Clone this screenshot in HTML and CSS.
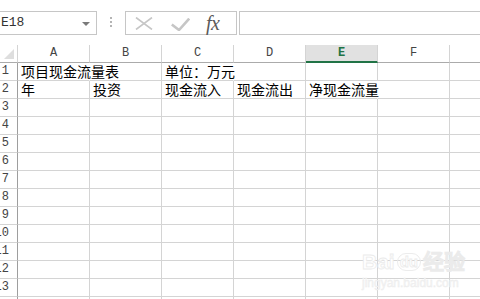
FILE: index.html
```html
<!DOCTYPE html>
<html lang="zh-CN">
<head>
<meta charset="utf-8">
<title>Sheet</title>
<link rel="stylesheet" href="styles.css">
</head>
<body>
<div class="app">
  <div class="fbar">
    <div class="namebox"><span class="ref">E18</span><span class="caret"></span></div>
    <div class="grip"><i></i><i></i><i></i></div>
    <div class="btns">
      <svg class="ico-x" width="18" height="13" viewBox="0 0 18 13"><path d="M1 0.5 L17 12.5 M17 0.5 L1 12.5" stroke="#c6c6c6" stroke-width="1.6" fill="none"/></svg>
      <svg class="ico-ok" width="19" height="13" viewBox="0 0 19 13"><path d="M0.8 6.5 L8 12 L18.2 0.6" stroke="#c6c6c6" stroke-width="2.6" fill="none" stroke-linejoin="miter"/></svg>
      <span class="fx">fx</span>
    </div>
    <div class="input"></div>
  </div>
  <div class="sheet">
    <div class="row hdr">
      <div class="rh corner"><svg width="10" height="10" viewBox="0 0 10 10"><path d="M0 10 L10 10 L10 0 Z" fill="#dedede"/></svg></div>
      <div class="c">A</div><div class="c">B</div><div class="c">C</div><div class="c">D</div><div class="c sel">E</div><div class="c">F</div><div class="c"></div>
    </div>
    <div class="row">
      <div class="rh">1</div>
      <div class="c t nob">项目现金流量表</div><div class="c"></div><div class="c t nob">单位：万元</div><div class="c"></div><div class="c"></div><div class="c"></div><div class="c"></div>
    </div>
    <div class="row">
      <div class="rh">2</div>
      <div class="c t">年</div><div class="c t">投资</div><div class="c t">现金流入</div><div class="c t">现金流出</div><div class="c t nob">净现金流量</div><div class="c"></div><div class="c"></div>
    </div>
    <div class="row"><div class="rh">3</div><div class="c"></div><div class="c"></div><div class="c"></div><div class="c"></div><div class="c"></div><div class="c"></div><div class="c"></div></div>
    <div class="row"><div class="rh">4</div><div class="c"></div><div class="c"></div><div class="c"></div><div class="c"></div><div class="c"></div><div class="c"></div><div class="c"></div></div>
    <div class="row"><div class="rh">5</div><div class="c"></div><div class="c"></div><div class="c"></div><div class="c"></div><div class="c"></div><div class="c"></div><div class="c"></div></div>
    <div class="row"><div class="rh">6</div><div class="c"></div><div class="c"></div><div class="c"></div><div class="c"></div><div class="c"></div><div class="c"></div><div class="c"></div></div>
    <div class="row"><div class="rh">7</div><div class="c"></div><div class="c"></div><div class="c"></div><div class="c"></div><div class="c"></div><div class="c"></div><div class="c"></div></div>
    <div class="row"><div class="rh">8</div><div class="c"></div><div class="c"></div><div class="c"></div><div class="c"></div><div class="c"></div><div class="c"></div><div class="c"></div></div>
    <div class="row"><div class="rh">9</div><div class="c"></div><div class="c"></div><div class="c"></div><div class="c"></div><div class="c"></div><div class="c"></div><div class="c"></div></div>
    <div class="row"><div class="rh">10</div><div class="c"></div><div class="c"></div><div class="c"></div><div class="c"></div><div class="c"></div><div class="c"></div><div class="c"></div></div>
    <div class="row"><div class="rh">11</div><div class="c"></div><div class="c"></div><div class="c"></div><div class="c"></div><div class="c"></div><div class="c"></div><div class="c"></div></div>
    <div class="row"><div class="rh">12</div><div class="c"></div><div class="c"></div><div class="c"></div><div class="c"></div><div class="c"></div><div class="c"></div><div class="c"></div></div>
    <div class="row"><div class="rh">13</div><div class="c"></div><div class="c"></div><div class="c"></div><div class="c"></div><div class="c"></div><div class="c"></div><div class="c"></div></div>
    <div class="row"><div class="rh">14</div><div class="c"></div><div class="c"></div><div class="c"></div><div class="c"></div><div class="c"></div><div class="c"></div><div class="c"></div></div>
  </div>
  <div class="watermark">
    <div class="wm-logo"><span>Bai</span><span class="paw">du</span><span>经验</span></div>
    <div class="wm-url">jingyan.baidu.com</div>
  </div>
</div>
</body>
</html>
```
FILE: styles.css
```css
html, body {
  margin: 0;
  padding: 0;
  background: #ffffff;
}
.app {
  position: relative;
  width: 480px;
  height: 299px;
  overflow: hidden;
  background: #ffffff;
  font-family: "Liberation Mono", "DejaVu Sans Mono", monospace;
}
.fbar {
  display: flex;
  align-items: flex-start;
  height: 45px;
  padding-top: 11px;
  box-sizing: border-box;
}
.namebox {
  margin-left: -1px;
  width: 98px;
  height: 24px;
  box-sizing: border-box;
  border: 1px solid #c6c6c6;
  display: flex;
  align-items: center;
  justify-content: space-between;
  padding: 0 6px 0 1px;
  flex: none;
}
.ref {
  font-size: 13px;
  color: #333333;
  line-height: 20px;
}
.caret {
  width: 0;
  height: 0;
  border-left: 4px solid transparent;
  border-right: 4px solid transparent;
  border-top: 4px solid #7a7a7a;
  margin-top: 1px;
}
.grip {
  margin-left: 13px;
  margin-top: 6px;
  width: 2px;
  display: flex;
  flex-direction: column;
  gap: 2px;
  flex: none;
}
.grip i {
  display: block;
  width: 2px;
  height: 2px;
  background: #b4b4b4;
}
.btns {
  margin-left: 13px;
  width: 112px;
  height: 24px;
  box-sizing: border-box;
  border: 1px solid #c6c6c6;
  display: flex;
  align-items: center;
  flex: none;
}
.ico-x {
  margin-left: 9px;
  margin-top: 1px;
}
.ico-ok {
  margin-left: 18px;
  margin-top: 2px;
}
.fx {
  margin-left: 16px;
  font-family: "Liberation Serif", "DejaVu Serif", serif;
  font-style: italic;
  font-size: 20px;
  color: #5a5a5a;
  line-height: 22px;
  letter-spacing: -0.5px;
}
.input {
  margin-left: 2px;
  margin-right: -2px;
  flex: 1;
  height: 24px;
  box-sizing: border-box;
  border: 1px solid #c6c6c6;
}
.sheet {
  width: 480px;
}
.row {
  display: flex;
  height: 18px;
}
.rh {
  flex: none;
  width: 18px;
  height: 18px;
  box-sizing: border-box;
  border-right: 1px solid #9e9e9e;
  border-bottom: 1px solid #d4d4d4;
  display: flex;
  justify-content: flex-end;
  align-items: center;
  padding-right: 8px;
  font-size: 12px;
  color: #444444;
  line-height: 17px;
}
.c {
  flex: none;
  width: 72px;
  height: 18px;
  box-sizing: border-box;
  border-right: 1px solid #d4d4d4;
  border-bottom: 1px solid #d4d4d4;
}
.hdr .c {
  text-align: center;
  font-size: 12px;
  line-height: 17px;
  color: #444444;
  border-bottom-color: #ababab;
}
.hdr .corner {
  border-right-color: #d4d4d4;
  border-bottom-color: #ababab;
  padding: 0 3px 3px 0;
  align-items: flex-end;
}
.hdr .corner svg {
  display: block;
}
.hdr .sel {
  background: #e1e1e1;
  border-bottom: 2px solid #217346;
  color: #217346;
  font-weight: bold;
  line-height: 16px;
}
.t {
  font-family: "Noto Sans CJK SC", "Noto Sans CJK JP", sans-serif;
  font-size: 14px;
  line-height: 17px;
  color: #000000;
  padding-left: 3px;
  white-space: nowrap;
  overflow: visible;
}
.nob {
  border-right-color: transparent;
}
.watermark {
  position: absolute;
  left: 362px;
  top: 250px;
  color: #ffffff;
  -webkit-text-stroke: 0.8px #ebebeb;
  pointer-events: none;
}
.wm-logo {
  display: flex;
  align-items: center;
  gap: 2px;
  font-family: "Liberation Sans", Arial, sans-serif;
  font-weight: bold;
  font-size: 21px;
  line-height: 24px;
}
.wm-logo .paw {
  font-size: 15px;
  border: 1px solid #ececec;
  border-radius: 10px;
  padding: 0 2px;
  line-height: 16px;
}
.wm-url {
  font-family: "Liberation Sans", Arial, sans-serif;
  font-size: 12px;
  line-height: 14px;
  margin-top: 2px;
  color: #f4f4f4;
  -webkit-text-stroke: 0.4px #ececec;
}
```
